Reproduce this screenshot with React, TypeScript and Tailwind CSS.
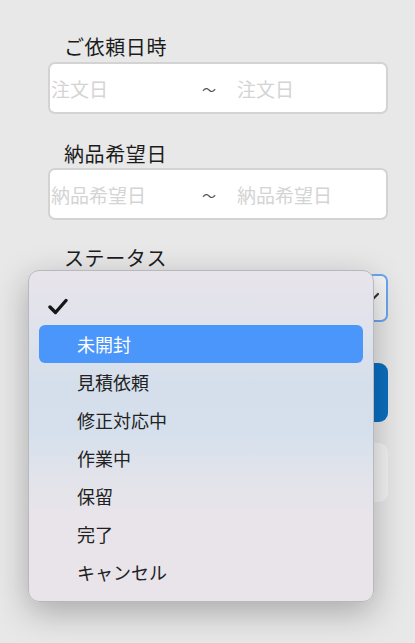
import React from "react";

const statuses = ["未開封", "見積依頼", "修正対応中", "作業中", "保留", "完了", "キャンセル"];

function DateRange({ placeholder }: { placeholder: string }) {
  return (
    <div className="h-[52px] rounded-[7px] border-2 border-[#d3d3d3] bg-white flex items-center pl-[1px] text-[19px] leading-none">
      <span className="w-[151px] text-[#d4d4d4] shrink-0">{placeholder}</span>
      <span className="w-[35px] shrink-0 text-[#555] text-[14px] pt-[2px]">～</span>
      <span className="text-[#d4d4d4]">{placeholder}</span>
    </div>
  );
}

function Label({ children }: { children: React.ReactNode }) {
  return (
    <div className="pl-[16px] h-[24px] leading-[24px] text-[20px] text-[#1c1c1c] tracking-[0.6px]">
      {children}
    </div>
  );
}

export default function App() {
  return (
    <div
      className="relative w-[415px] h-[643px] overflow-hidden bg-[#e8e8e8]"
      style={{ fontFamily: '"Noto Sans CJK JP", "Noto Sans", sans-serif' }}
    >
      <div className="pl-[48px] pr-[27px] pt-[35px] flex flex-col">
        <Label>ご依頼日時</Label>
        <div className="mt-[3px]">
          <DateRange placeholder="注文日" />
        </div>

        <div className="mt-[28px]">
          <Label>納品希望日</Label>
        </div>
        <div className="mt-[2px]">
          <DateRange placeholder="納品希望日" />
        </div>

        <div className="mt-[26px]">
          <Label>ステータス</Label>
        </div>
        <div className="mt-[4px] h-[48px] rounded-[7px] border-2 border-[#6aa6f2] bg-[#f5f5f5] flex items-center justify-end pr-[6px]">
          <svg width="16" height="10" viewBox="0 0 16 10" className="-mt-[2px]">
            <path d="M2 2 L8 8 L14 2" fill="none" stroke="#333" strokeWidth="2.2" strokeLinecap="round" />
          </svg>
        </div>

        <div className="mt-[41px] h-[59px] rounded-[9px] bg-[#0a6fc1]" />
        <div className="mt-[21px] h-[59px] rounded-[9px] bg-[#f3f3f3]" />
      </div>

      {/* status picker popup */}
      <div
        className="absolute left-[28px] top-[270px] w-[346px] h-[332px] rounded-[11px] border border-[#b9b9bd] shadow-[0_10px_34px_rgba(0,0,0,0.28)] px-[10px] pt-[16px] pb-[10px] flex flex-col"
        style={{
          background:
            "linear-gradient(180deg, #e8e4eb 0%, #dfe2ec 18%, #d4dfeb 35%, #d6e0ec 50%, #e2e3eb 62%, #e8e4ea 75%, #e8e4ea 100%)",
        }}
      >
        <div className="h-[38px] flex items-center pl-[9px]">
          <svg width="20" height="17" viewBox="0 0 20 17">
            <path d="M2 9 L7.5 14.5 L18 2.5" fill="none" stroke="#161616" strokeWidth="3.4" strokeLinecap="round" strokeLinejoin="round" />
          </svg>
        </div>
        {statuses.map((s, i) => (
          <div
            key={s}
            className={
              i === 0
                ? "h-[38px] flex items-center pl-[38px] rounded-[6px] bg-[#4b96fb] text-white text-[18px]"
                : "h-[38px] flex items-center pl-[38px] text-[#222] text-[18px]"
            }
          >
            {s}
          </div>
        ))}
      </div>
    </div>
  );
}
